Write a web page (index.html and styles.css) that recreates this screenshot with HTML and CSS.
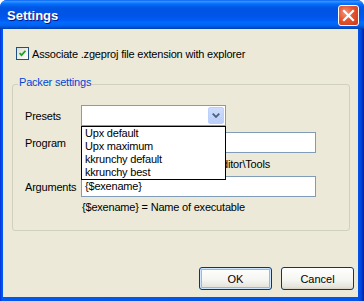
FILE: index.html
```html
<!DOCTYPE html>
<html lang="en">

<head>
    <meta charset="UTF-8">
    <title>Settings</title>
    <link rel="stylesheet" href="styles.css">
</head>

<body>

    <div class="window">
        <div class="titlebar">
            <span class="title">Settings</span>
            <span class="close">
                <svg width="13" height="13" viewBox="0 0 13 13">
                    <path d="M2 2 L11 11 M11 2 L2 11" stroke="#fff" stroke-width="2.2" stroke-linecap="square"/>
                </svg>
            </span>
        </div>

        <div class="client">
            <label class="check">
                <span class="box">
                    <svg width="7" height="7" viewBox="0 0 7 7">
                        <path d="M0.5 3 L2.5 5.2 L6.5 0.8" fill="none" stroke="#21A121" stroke-width="1.8"/>
                    </svg>
                </span>
                Associate .zgeproj file extension with explorer
            </label>

            <div class="group">
                <span class="legend">Packer settings</span>

                <div class="row">
                    <span class="lbl">Presets</span>
                    <div class="combo">
                        <span class="combo-btn">
                            <svg width="8" height="5" viewBox="0 0 8 5">
                                <path d="M0.7 0.7 L4 4 L7.3 0.7" fill="none" stroke="#4D6185" stroke-width="1.8"/>
                            </svg>
                        </span>
                    </div>
                </div>
                <div class="row">
                    <span class="lbl">Program</span>
                    <div class="edit"></div>
                </div>
                <div class="hint hint-path">Program files are in ZGameEditor\Tools</div>
                <div class="row">
                    <span class="lbl">Arguments</span>
                    <div class="edit">{$exename}</div>
                </div>
                <div class="hint hint-args">{$exename} = Name of executable</div>

                <ul class="droplist">
                    <li>Upx default</li>
                    <li>Upx maximum</li>
                    <li>kkrunchy default</li>
                    <li>kkrunchy best</li>
                </ul>
            </div>

            <div class="buttons">
                <button class="btn btn-default">OK</button>
                <button class="btn">Cancel</button>
            </div>
        </div>
    </div>

</body>

</html>
```

FILE: styles.css
```css
body {
    margin: 0;
    background: #ffffff;
    font-family: "Liberation Sans", Arial, sans-serif;
    font-size: 11px;
    color: #000000;
}

.window {
    width: 364px;
    height: 301px;
    display: flex;
    flex-direction: column;
    background: linear-gradient(90deg, #0831D9 0, #0058EE 2px, #0055EA 358px, #0046DC 361px, #001EA0 364px);
    border-radius: 7px 7px 0 0;
    overflow: hidden;
}

.titlebar {
    height: 29px;
    flex: none;
    display: flex;
    align-items: center;
    justify-content: space-between;
    padding: 0 5px 0 7px;
    background: linear-gradient(#0058EE 0, #3593FF 4%, #288EFF 7%, #127DFF 10%, #036FFC 14%, #0262EE 20%, #0057E5 26%, #0054E3 34%, #0055EB 58%, #005BF5 68%, #026AFE 78%, #0062EF 88%, #0052D6 94%, #0040AB 100%);
}

.title {
    color: #ffffff;
    font-weight: bold;
    font-size: 13px;
    text-shadow: 1px 1px 0 #0A1883;
    padding-top: 1px;
}

.close {
    width: 21px;
    height: 21px;
    box-sizing: border-box;
    border: 1px solid #ffffff;
    border-radius: 3px;
    background: radial-gradient(circle at 35% 35%, #F4977A 0, #E4532E 45%, #C8391A 100%);
    display: flex;
    align-items: center;
    justify-content: center;
    margin-top: 1px;
}

.client {
    flex: 1;
    margin: 0 6px 4px 3px;
    padding: 18px 4px 7px 9px;
    background: #ECE9D8;
    display: flex;
    flex-direction: column;
    letter-spacing: -0.2px;
}

.check {
    display: flex;
    align-items: center;
    gap: 3px;
    margin-left: 4px;
    height: 13px;
}

.box {
    width: 13px;
    height: 13px;
    box-sizing: border-box;
    border: 1px solid #1C5180;
    background: linear-gradient(135deg, #DCDCD7, #FFFFFF);
    display: flex;
    align-items: center;
    justify-content: center;
}

.group {
    position: relative;
    margin-top: 24px;
    width: 338px;
    box-sizing: border-box;
    border: 1px solid #D0D0BF;
    border-radius: 3px;
    padding: 20px 0 15px 12px;
}

.legend {
    position: absolute;
    top: -9px;
    left: 5px;
    padding: 0 1px;
    line-height: 13px;
    background: #ECE9D8;
    color: #0046D5;
}

.row {
    display: flex;
    align-items: center;
    height: 21px;
    margin-bottom: 6px;
}

.lbl {
    width: 56px;
    flex: none;
}

.combo {
    width: 145px;
    height: 21px;
    box-sizing: border-box;
    border: 1px solid #7F9DB9;
    background: #ffffff;
    padding: 1px;
    display: flex;
    justify-content: flex-end;
}

.combo-btn {
    width: 16px;
    height: 17px;
    box-sizing: border-box;
    border: 1px solid #BAD1FC;
    border-radius: 2px;
    background: linear-gradient(#CFDDFC, #BACEF9);
    display: flex;
    align-items: center;
    justify-content: center;
}

.edit {
    width: 235px;
    height: 21px;
    box-sizing: border-box;
    border: 1px solid #7F9DB9;
    background: #ffffff;
    padding: 0 3px;
    line-height: 19px;
}

.hint {
    margin-left: 57px;
    line-height: 16px;
    height: 16px;
    white-space: nowrap;
}

.hint-path {
    margin-top: -6px;
    margin-bottom: 1px;
    padding-left: 3px;
    line-height: 22px;
    height: 22px;
}

.hint-args {
    margin-top: -4px;
}

.droplist {
    position: absolute;
    top: 41px;
    left: 68px;
    width: 145px;
    box-sizing: border-box;
    margin: 0;
    padding: 0;
    list-style: none;
    border: 1px solid #000000;
    background: #ffffff;
}

.droplist li {
    line-height: 13px;
    height: 13px;
    padding-left: 3px;
}

.buttons {
    margin-top: auto;
    display: flex;
    justify-content: flex-end;
    gap: 9px;
}

.btn {
    width: 73px;
    height: 23px;
    box-sizing: border-box;
    border: 1px solid #003C74;
    border-radius: 3px;
    background: linear-gradient(#FFFFFF 0, #F4F4F0 60%, #E6E4DA 90%, #D6D0C5 100%);
    font-family: "Liberation Sans", Arial, sans-serif;
    font-size: 11px;
    color: #000000;
    padding: 0;
}

.btn-default {
    box-shadow: inset 0 0 0 1px #CEE7FF, inset 0 0 0 2px #98B8EA;
}
```
